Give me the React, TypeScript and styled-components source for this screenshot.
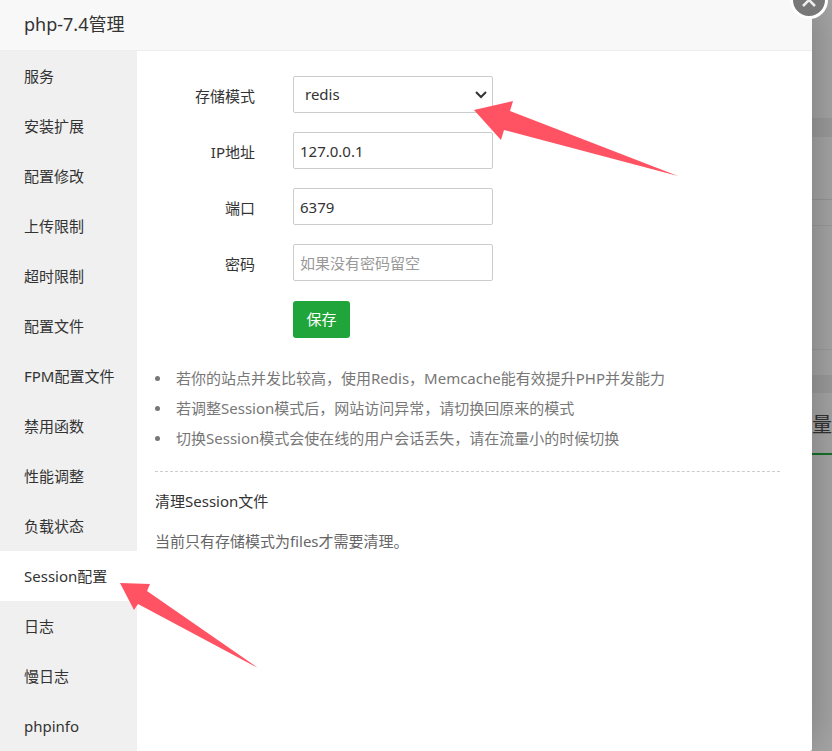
import React from 'react';
import styled, { createGlobalStyle } from 'styled-components';

const GlobalStyle = createGlobalStyle`
  * { box-sizing: border-box; }
  body {
    margin: 0;
    overflow: hidden;
    background: #a8a8a8;
    color: #333;
    font: 15px/30px "Noto Sans", "Noto Sans CJK SC", sans-serif;
  }
  button, input, select { font: inherit; color: inherit; }
`;

const Screen = styled.div`
  display: flex;
  position: relative;
  min-height: 100vh;
  overflow: hidden;
`;

const Dialog = styled.section`
  position: relative;
  z-index: 1;
  flex: 1;
  min-width: 0;
  display: flex;
  flex-direction: column;
  background: #fff;
  border-radius: 0 0 2px 0;
  box-shadow: 1px 1px 50px rgba(0, 0, 0, 0.3);
`;

const Header = styled.header`
  height: 51px;
  padding: 0 24px;
  background: #f8f8f8;
  border-bottom: 1px solid #eee;
`;

const Title = styled.h1`
  margin: 0;
  font-size: 18px;
  font-weight: 400;
  line-height: 48px;
`;

const CloseButton = styled.button`
  position: absolute;
  top: -19px;
  right: -16px;
  width: 38px;
  height: 38px;
  padding: 0;
  border: 3px solid #fff;
  border-radius: 50%;
  background: #787878;
  color: #fff;
  svg { display: block; }
`;

const Body = styled.div`
  flex: 1;
  display: flex;
`;

const Sidebar = styled.nav`
  flex: 0 0 137px;
  background: #f0f0f0;
`;

const NavLink = styled.a<{ $active: boolean }>`
  display: block;
  height: 50px;
  padding-left: 24px;
  line-height: 50px;
  white-space: nowrap;
  text-decoration: none;
  color: #333;
  background: ${(p) => (p.$active ? '#fff' : 'transparent')};
`;

const Content = styled.main`
  flex: 1;
  min-width: 0;
  padding: 25px 32px 20px 18px;
`;

const Form = styled.form`
  display: flex;
  flex-direction: column;
  gap: 19px;
`;

const Field = styled.div`
  display: grid;
  grid-template-columns: 100px 200px;
  column-gap: 38px;
  align-items: center;
`;

const Label = styled.label`
  text-align: right;
  line-height: 37px;
  padding-top: 2px;
  height: 37px;
`;

const TextInput = styled.input`
  width: 100%;
  height: 37px;
  padding: 0 6px;
  border: 1px solid #ccc;
  border-radius: 2px;
  background: #fff;
  outline: none;
  &::placeholder { color: #999; opacity: 1; }
`;

const SelectBox = styled.div`
  position: relative;
  svg {
    position: absolute;
    right: 6px;
    top: 14px;
    pointer-events: none;
  }
`;

const Select = styled.select`
  display: block;
  width: 100%;
  height: 37px;
  padding: 0 24px 2px 11px;
  border: 1px solid #ccc;
  border-radius: 2px;
  background: #fff;
  appearance: none;
  outline: none;
`;

const SaveButton = styled.button`
  grid-column: 2;
  justify-self: start;
  width: 57px;
  height: 37px;
  margin-top: 1px;
  padding: 0 0 2px;
  border: 0;
  border-radius: 3px;
  background: #20a53a;
  color: #fff;
`;

const Notes = styled.ul`
  margin: 25px 0 0;
  padding: 0;
  list-style: none;
  color: #777;
`;

const Note = styled.li`
  display: flex;
  align-items: center;
  gap: 16px;
  &::before {
    content: '';
    flex: none;
    width: 5px;
    height: 5px;
    border-radius: 50%;
    background: #777;
  }
`;

const Cleanup = styled.section`
  margin-top: 18px;
  padding-top: 14px;
  border-top: 1px dashed #ccc;
`;

const CleanupTitle = styled.h2`
  margin: 0 0 10px;
  font-size: 15px;
  font-weight: 400;
`;

const CleanupText = styled.p`
  margin: 0;
  color: #666;
`;

const Backdrop = styled.aside`
  flex: 0 0 20px;
  display: flex;
  flex-direction: column;
  overflow: hidden;
`;

const Block = styled.div<{ $height: number; $dark?: boolean; $line?: string }>`
  flex: none;
  display: flex;
  justify-content: flex-end;
  height: ${(p) => p.$height}px;
  background: ${(p) => (p.$dark ? '#9e9e9e' : '#a8a8a8')};
  border-bottom: ${(p) => p.$line ?? '0'};
  font-size: 20px;
  line-height: 64px;
  white-space: nowrap;
`;

const Arrow = styled.svg`
  position: absolute;
  z-index: 2;
  pointer-events: none;
`;

const SelectArrow = styled(Arrow)`
  left: 473px;
  top: 101px;
`;

const SessionArrow = styled(Arrow)`
  left: 119px;
  top: 583px;
`;

const navItems = [
  '服务', '安装扩展', '配置修改', '上传限制', '超时限制', '配置文件', 'FPM配置文件',
  '禁用函数', '性能调整', '负载状态', 'Session配置', '日志', '慢日志', 'phpinfo',
];

const notes = [
  '若你的站点并发比较高，使用Redis，Memcache能有效提升PHP并发能力',
  '若调整Session模式后，网站访问异常，请切换回原来的模式',
  '切换Session模式会使在线的用户会话丢失，请在流量小的时候切换',
];

export default function App() {
  return (
    <>
      <GlobalStyle />
      <Screen>
        <Dialog role="dialog" aria-labelledby="dialog-title">
          <Header>
            <Title id="dialog-title">php-7.4管理</Title>
          </Header>
          <CloseButton type="button" aria-label="关闭">
            <svg width="32" height="32" viewBox="0 0 32 32" fill="none" stroke="#eee" strokeWidth="2.5">
              <path d="M10 10 22 22M22 10 10 22" />
            </svg>
          </CloseButton>
          <Body>
            <Sidebar>
              {navItems.map((item) => (
                <NavLink key={item} href="#" $active={item === 'Session配置'}>{item}</NavLink>
              ))}
            </Sidebar>
            <Content>
              <Form onSubmit={(e) => e.preventDefault()}>
                <Field>
                  <Label htmlFor="mode">存储模式</Label>
                  <SelectBox>
                    <Select id="mode" defaultValue="redis">
                      <option value="files">files</option>
                      <option value="redis">redis</option>
                      <option value="memcache">memcache</option>
                    </Select>
                    <svg width="12" height="10" viewBox="0 0 12 10" fill="none" stroke="#333" strokeWidth="2">
                      <path d="M1 2 6 7 11 2" />
                    </svg>
                  </SelectBox>
                </Field>
                <Field>
                  <Label htmlFor="ip">IP地址</Label>
                  <TextInput id="ip" defaultValue="127.0.0.1" />
                </Field>
                <Field>
                  <Label htmlFor="port">端口</Label>
                  <TextInput id="port" defaultValue="6379" />
                </Field>
                <Field>
                  <Label htmlFor="password">密码</Label>
                  <TextInput id="password" placeholder="如果没有密码留空" />
                </Field>
                <Field>
                  <SaveButton type="submit">保存</SaveButton>
                </Field>
              </Form>
              <Notes>
                {notes.map((note) => <Note key={note}>{note}</Note>)}
              </Notes>
              <Cleanup>
                <CleanupTitle>清理Session文件</CleanupTitle>
                <CleanupText>当前只有存储模式为files才需要清理。</CleanupText>
              </Cleanup>
            </Content>
          </Body>
        </Dialog>
        <Backdrop>
          <Block $height={118} />
          <Block $height={19} $dark />
          <Block $height={63} $line="1px solid #989898" />
          <Block $height={26} $line="1px solid #9e9e9e" />
          <Block $height={124} $line="1px solid #9e9e9e" />
          <Block $height={25} />
          <Block $height={18} $dark />
          <Block $height={62} $line="2px solid #167328">流量</Block>
        </Backdrop>
        <SelectArrow width="206" height="76" viewBox="473 101 206 76" fill="#ff5262">
          <path d="M474 110 513 101 510 111 678 176 504 130 501 140Z" />
        </SelectArrow>
        <SessionArrow width="140" height="86" viewBox="119 583 140 86" fill="#ff5262">
          <path d="M120 583 150 584 147 591 258 668 138 604 134 610Z" />
        </SessionArrow>
      </Screen>
    </>
  );
}
